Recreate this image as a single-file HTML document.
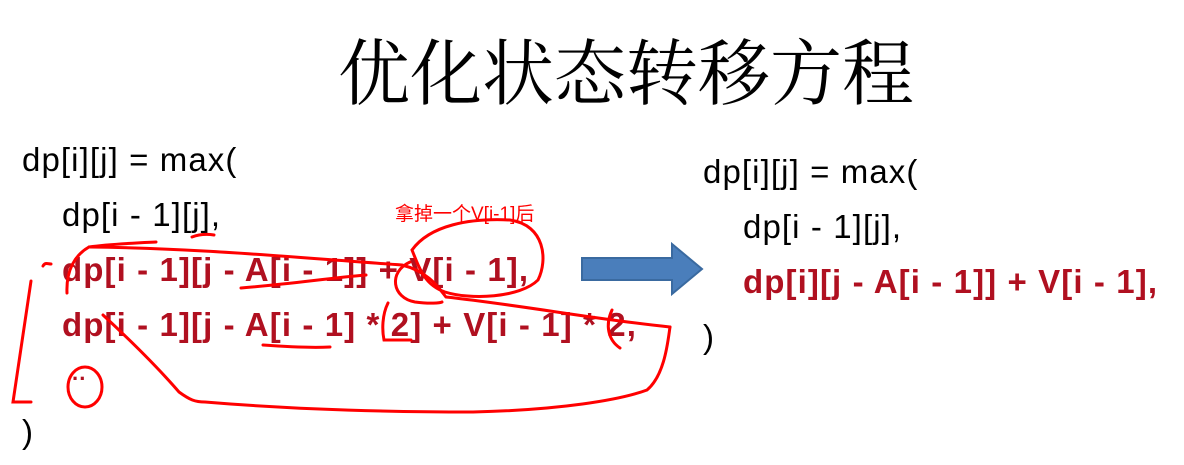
<html><head><style>
body{margin:0;width:1184px;height:465px;background:#fff;position:relative;overflow:hidden;font-family:"Liberation Sans","Noto Sans CJK SC",sans-serif}
.t{position:absolute;font-size:33px;letter-spacing:1.1px;color:#000;white-space:pre;line-height:1}
.b{color:#b01020;font-weight:bold;letter-spacing:1.1px}
</style></head><body>
<div class="t" style="left:338px;top:32px;font-size:72px;letter-spacing:0;font-family:'Noto Serif CJK SC',serif">优化状态转移方程</div>
<div class="t" style="left:22px;top:143px">dp[i][j] = max(</div>
<div class="t" style="left:62px;top:198px">dp[i - 1][j],</div>
<div class="t b" style="left:62px;top:253px">dp[i - 1][j - A[i - 1]] + V[i - 1],</div>
<div class="t b" style="left:62px;top:308px">dp[i - 1][j - A[i - 1] * 2] + V[i - 1] * 2,</div>
<div class="t b" style="left:72px;top:362px;font-size:22px">..</div>
<div class="t" style="left:22px;top:415px">)</div>
<div class="t" style="left:395px;top:205px;font-size:19px;letter-spacing:0;color:#f00">拿掉一个V[i-1]后</div>
<div class="t" style="left:703px;top:155px">dp[i][j] = max(</div>
<div class="t" style="left:743px;top:210px">dp[i - 1][j],</div>
<div class="t b" style="left:743px;top:265px">dp[i][j - A[i - 1]] + V[i - 1],</div>
<div class="t" style="left:703px;top:320px">)</div>
<svg style="position:absolute;left:0;top:0" width="1184" height="465">
<path d="M582 258H672V244L702 269L672 294V280H582Z" fill="#4a7ebb" stroke="#3a6aa0" stroke-width="2"/>
<g fill="none" stroke="#f00" stroke-width="3" stroke-linecap="round">
<path d="M31 281L13 402H31"/>
<path d="M43 266C45 262 48 264 51 264"/>
<path d="M67 293C66 270 75 255 89 247C110 244 135 243 156 242"/>
<path d="M89 247C200 248 300 258 402 265C430 272 440 290 446 297C520 305 600 320 670 327"/>
<path d="M241 288C290 284 330 278 366 275"/>
<path d="M412 250C430 225 470 218 510 220C545 225 548 260 538 280C520 298 470 300 445 292C425 285 420 270 412 250Z"/>
<path d="M410 262C388 272 392 298 415 302C430 304 440 303 442 302"/>
<path d="M103 315C130 340 160 370 179 392C190 400 195 402 205 402C300 410 400 412 473 412C560 410 620 400 647 390C665 375 668 340 670 327"/>
<path d="M263 345C290 347 310 348 330 347"/>
<path d="M388 303C382 315 382 330 384 340H411"/>
<path d="M612 310C605 325 608 340 620 348"/>
<path d="M192 237C200 234 208 234 214 235"/>
<ellipse cx="85" cy="387" rx="17" ry="20"/>
</g>
</svg>
</body></html>
